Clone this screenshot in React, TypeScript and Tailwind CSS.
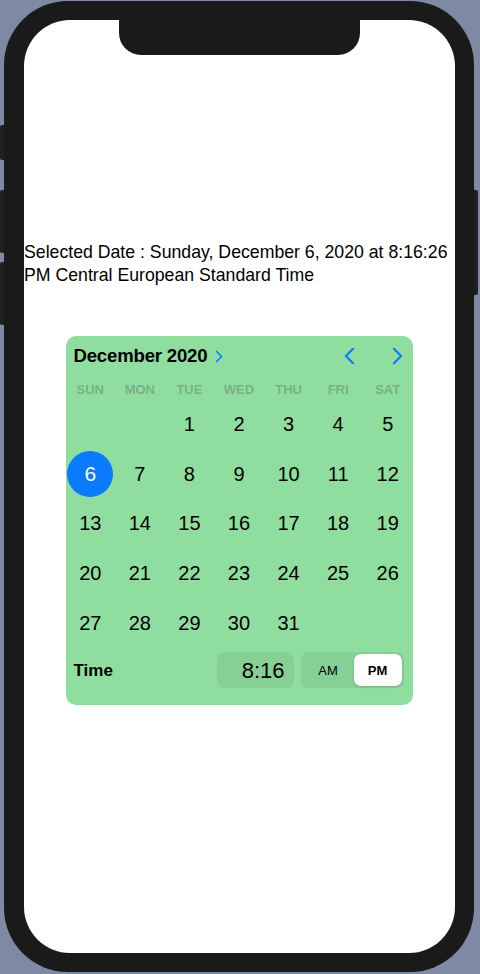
import React from "react"

const weekdays = ["SUN", "MON", "TUE", "WED", "THU", "FRI", "SAT"]

// December 2020 starts on a Tuesday
const cells: (number | null)[] = [null, null, ...Array.from({ length: 31 }, (_, i) => i + 1)]
while (cells.length < 35) cells.push(null)

const Chevron = ({ dir, className }: { dir: "left" | "right"; className?: string }) => (
  <svg viewBox="0 0 12 20" className={className} fill="none">
    <polyline
      points={dir === "right" ? "2,2 10,10 2,18" : "10,2 2,10 10,18"}
      stroke="#0a7aff"
      strokeWidth="2.4"
      strokeLinecap="round"
      strokeLinejoin="round"
    />
  </svg>
)

const Calendar = () => {
  return (
    <div className="w-[347px] rounded-[10px] bg-[#8fdea0] pb-[17px]">
      {/* header */}
      <div className="flex items-center h-[39px] pl-[8px] pr-[10px] pt-[1px]">
        <span className="text-[18.6px] font-bold text-black tracking-[-0.2px]">December 2020</span>
        <Chevron dir="right" className="w-[8px] h-[13px] ml-[8px]" />
        <div className="ml-auto flex items-center gap-[37px]">
          <Chevron dir="left" className="w-[11px] h-[18px]" />
          <Chevron dir="right" className="w-[11px] h-[18px]" />
        </div>
      </div>

      {/* weekdays */}
      <div className="grid grid-cols-7 h-[18px] mt-[5px] items-center">
        {weekdays.map((d) => (
          <div key={d} className="text-center text-[13px] font-semibold text-[rgba(60,60,67,0.3)]">
            {d}
          </div>
        ))}
      </div>

      {/* days */}
      <div className="grid grid-cols-7 mt-[1px]">
        {cells.map((n, i) => (
          <div key={i} className="h-[49.7px] flex items-center justify-center">
            {n === 6 ? (
              <div className="w-[46px] h-[46px] rounded-full bg-[#0a7aff] flex items-center justify-center text-white text-[21px] font-medium">
                6
              </div>
            ) : (
              <span className="text-[20px] text-black">{n ?? ""}</span>
            )}
          </div>
        ))}
      </div>

      {/* time row */}
      <div className="flex items-center pl-[8px] pr-[9px] mt-[5px]">
        <span className="text-[17px] font-bold text-black">Time</span>
        <div className="ml-auto flex items-center gap-[7px]">
          <div className="w-[77px] h-[36px] rounded-[8px] bg-[rgba(0,0,0,0.06)] flex items-center justify-end pr-[9px] text-[22px] text-black">
            8:16
          </div>
          <div className="w-[103px] h-[36px] rounded-[8px] bg-[rgba(0,0,0,0.06)] flex items-center p-[2px]">
            <div className="flex-1 text-center text-[13px] font-medium text-black">AM</div>
            <div className="w-[48px] h-[32px] rounded-[7px] bg-white shadow-[0_1px_3px_rgba(0,0,0,0.15)] flex items-center justify-center text-[13px] font-semibold text-black">
              PM
            </div>
          </div>
        </div>
      </div>
    </div>
  )
}

export default function App() {
  return (
    <div
      className="relative w-[480px] h-[974px] overflow-hidden bg-[#7e8aa3]"
      style={{ fontFamily: '"Liberation Sans", Arial, sans-serif' }}
    >
      {/* side buttons */}
      <div className="absolute left-0 top-[125px] w-[8px] h-[35px] rounded-l-[2px] bg-[#202020]" />
      <div className="absolute left-0 top-[190px] w-[8px] h-[63px] rounded-l-[2px] bg-[#202020]" />
      <div className="absolute left-0 top-[262px] w-[8px] h-[63px] rounded-l-[2px] bg-[#202020]" />
      <div className="absolute right-[2px] top-[190px] w-[8px] h-[105px] rounded-r-[2px] bg-[#202020]" />

      {/* phone body */}
      <div className="relative ml-[4px] mt-[1px] w-[470px] h-[971px] rounded-[64px] bg-[#1a1a1a] pt-[19px] pl-[20px] pr-[19px] pb-[19px]">
        <div className="relative h-full rounded-[46px] bg-white overflow-hidden">
          {/* notch */}
          <div className="absolute left-[95px] top-0 w-[241px] h-[35px] rounded-b-[22px] bg-[#1a1a1a]" />

          <div className="pt-[221px] text-[17.7px] leading-[23px] text-black">
            Selected Date : Sunday, December 6, 2020 at 8:16:26 PM Central European Standard Time
          </div>

          <div className="flex justify-center mt-[49px] pr-[1px]">
            <Calendar />
          </div>
        </div>
      </div>
    </div>
  )
}
